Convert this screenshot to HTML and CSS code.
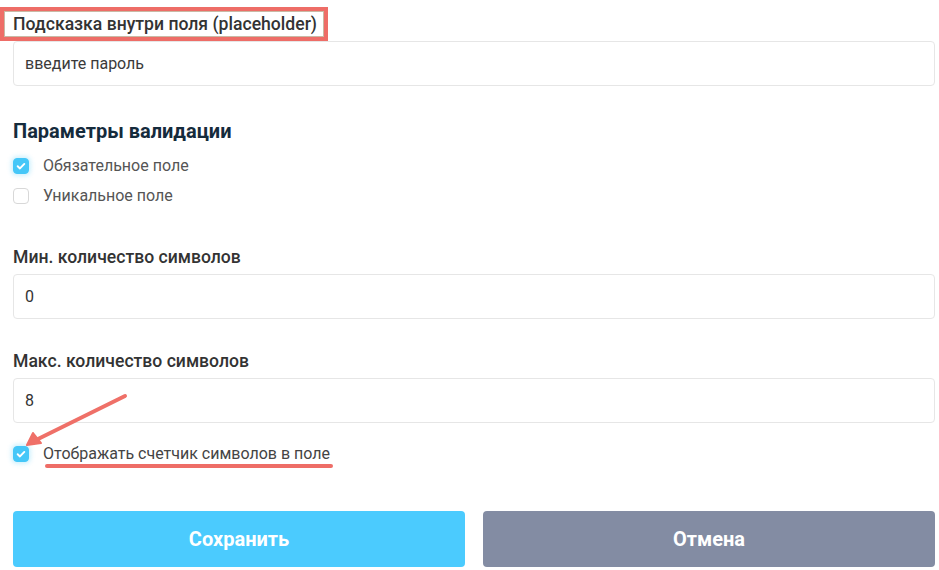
FILE: index.html
```html
<!DOCTYPE html>
<html lang="ru">
<head>
<meta charset="utf-8">
<link rel="stylesheet" href="styles.css">
</head>
<body>
<div class="form">
  <div class="field first">
    <div class="label annotated">Подсказка внутри поля (placeholder)</div>
    <div class="input placeholder">введите пароль</div>
  </div>

  <div class="section">
    <div class="heading">Параметры валидации</div>
    <div class="check"><span class="box on"><svg viewBox="0 0 16 16" width="16" height="16"><path d="M4.2 8.3l2.6 2.5 5-5.2" fill="none" stroke="#fff" stroke-width="2.2" stroke-linecap="round" stroke-linejoin="round"/></svg></span><span class="ctext">Обязательное поле</span></div>
    <div class="check"><span class="box"></span><span class="ctext">Уникальное поле</span></div>
  </div>

  <div class="field min">
    <div class="label">Мин. количество символов</div>
    <div class="input">0</div>
  </div>

  <div class="field max">
    <div class="label">Макс. количество символов</div>
    <div class="input">8</div>
  </div>

  <div class="check counter"><span class="box on"><svg viewBox="0 0 16 16" width="16" height="16"><path d="M4.2 8.3l2.6 2.5 5-5.2" fill="none" stroke="#fff" stroke-width="2.2" stroke-linecap="round" stroke-linejoin="round"/></svg></span><span class="ctext underlined">Отображать счетчик символов в поле</span></div>

  <div class="buttons">
    <button class="btn save">Сохранить</button>
    <button class="btn cancel">Отмена</button>
  </div>
</div>
<svg class="arrow" width="140" height="70" viewBox="0 0 140 70">
  <line x1="125" y1="13" x2="34" y2="58" stroke="#ef7068" stroke-width="4" stroke-linecap="round"/>
  <path d="M27 62 L33 50 L41 60 Z" fill="#ef7068" stroke="#ef7068" stroke-width="2" stroke-linejoin="round"/>
</svg>
</body>
</html>
```

FILE: styles.css
```css
html, body {
  margin: 0;
  padding: 0;
  background: #fff;
}
body {
  font-family: Roboto, "Liberation Sans", Arial, sans-serif;
  color: #333;
  position: relative;
  width: 939px;
  height: 570px;
  overflow: hidden;
}
.form {
  padding: 0 4px 0 13px;
  display: flex;
  flex-direction: column;
}
.field {
  display: flex;
  flex-direction: column;
}
.first { padding-top: 9px; }
.label {
  font-size: 17.6px;
  font-weight: 500;
  color: #333;
  line-height: 30px;
  height: 32px;
}
.annotated { position: relative; }
.annotated::before {
  content: "";
  position: absolute;
  left: -13px;
  top: -2px;
  width: 320px;
  height: 26px;
  border: 4px solid #ee6d67;
  box-shadow: inset 0 0 0 1px #c9b9a5;
  pointer-events: none;
}
.input {
  height: 43px;
  border: 1px solid #e6e6e6;
  border-radius: 4px;
  font-size: 16px;
  color: #333;
  padding-left: 11px;
  line-height: 43px;
}
.placeholder { color: #3a3a3a; }
.section {
  padding-top: 32px;
  display: flex;
  flex-direction: column;
}
.heading {
  font-size: 20px;
  font-weight: 700;
  color: #152b3c;
  line-height: 26px;
  height: 33px;
}
.check {
  display: flex;
  align-items: center;
  height: 30px;
  gap: 14px;
  font-size: 16px;
  color: #555;
}
.box {
  width: 14px;
  height: 14px;
  border: 1px solid #d8d8d8;
  border-radius: 4px;
  box-sizing: content-box;
  display: flex;
  align-items: center;
  justify-content: center;
}
.box.on {
  background: #45c7f8;
  border-color: #45c7f8;
  box-shadow: 0 0 4px 2px rgba(69, 199, 248, 0.25);
}
.box svg { display: block; }
.ctext { line-height: 20px; }
.min { padding-top: 31px; }
.max { padding-top: 27px; }
.counter {
  margin-top: 16px;
  color: #444;
}
.underlined { position: relative; }
.underlined::after {
  content: "";
  position: absolute;
  left: 2px;
  right: -3px;
  bottom: -4px;
  height: 4px;
  border-radius: 2px;
  background: #ee6d67;
}
.buttons {
  display: flex;
  gap: 18px;
  margin-top: 42px;
}
.btn {
  flex: 1;
  height: 56px;
  border: none;
  border-radius: 4px;
  color: #fff;
  font-family: Roboto, "Liberation Sans", Arial, sans-serif;
  font-size: 20px;
  font-weight: 700;
  padding: 0;
}
.save { background: #4bcbfe; }
.cancel { background: #838ca3; }
.arrow {
  position: absolute;
  left: 0;
  top: 383px;
  pointer-events: none;
}
```
